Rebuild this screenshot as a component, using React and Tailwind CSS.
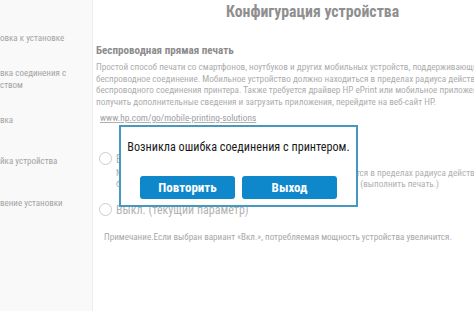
const body = { fontFamily: "'Roboto Condensed', Roboto, sans-serif" };

function Radio() {
  return <span className="inline-block w-[13px] h-[13px] rounded-full border border-[#cdcdcd] bg-white shrink-0" />;
}

export default function App() {
  return (
    <div className="relative w-[474px] h-[311px] overflow-hidden bg-white flex text-[#a6a6a6]" style={body}>
      {/* Sidebar */}
      <div className="w-[93px] shrink-0 h-full bg-[#f9f9f9] border-r border-[#ededed] overflow-hidden whitespace-nowrap text-[9px] text-[#a3a3a3]">
        <div className="pt-[30px] leading-[16px]">овка к установке</div>
        <div className="mt-[21px] leading-[12px]">
          <div>вка соединения с</div>
          <div>ством</div>
        </div>
        <div className="mt-[21px] leading-[16px]">вка</div>
        <div className="mt-[25px] leading-[16px]">йка устройства</div>
        <div className="mt-[26px] leading-[16px]">вение установки</div>
      </div>

      {/* Main */}
      <div className="flex-1 min-w-0 whitespace-nowrap">
        <div className="pl-[133px] pt-[1px] text-[15.8px] leading-[22px] font-bold text-[#8f8f8f]">
          Конфигурация устройства
        </div>
        <div className="pl-[3px] mt-[20px] text-[11.1px] leading-[16px] font-bold text-[#8c8c8c]">
          Беспроводная прямая печать
        </div>
        <div className="pl-[3px] mt-[2px] text-[9.2px] leading-[11.7px] text-[#adadad]">
          <div>Простой способ печати со смартфонов, ноутбуков и других мобильных устройств, поддерживающих</div>
          <div>беспроводное соединение. Мобильное устройство должно находиться в пределах радиуса действия</div>
          <div>беспроводного соединения принтера. Также требуется драйвер HP ePrint или мобильное приложение.</div>
          <div>получить дополнительные сведения и загрузить приложения, перейдите на веб-сайт HP.</div>
        </div>
        <div className="pl-[7px] mt-[3px] text-[9.4px] leading-[14px] text-[#a0a0a0] underline decoration-[#b0b0b0]">
          www.hp.com/go/mobile-printing-solutions
        </div>

        <div className="pl-[6px] mt-[26px] flex items-center gap-[4px] text-[12px] leading-[16px] text-[#b3b3b3]">
          <Radio />
          <span>Вкл.</span>
        </div>
        <div className="pl-[23px] text-[9.2px] leading-[11px] text-[#b0b0b0]">
          <div>Мобильные устройства могут печатать напрямую если находятся в пределах радиуса действия</div>
          <div>беспроводного соединения принтера HP, и иметь возможность (выполнить печать.)</div>
        </div>
        <div className="pl-[6px] mt-[13px] flex items-center gap-[4px] text-[12px] leading-[16px] text-[#b3b3b3]">
          <Radio />
          <span>Выкл. (текущий параметр)</span>
        </div>
        <div className="pl-[11px] mt-[12px] text-[9.1px] leading-[14px] text-[#a8a8a8]">
          Примечание.Если выбран вариант «Вкл.», потребляемая мощность устройства увеличится.
        </div>
      </div>

      {/* Dialog */}
      <div className="absolute left-[119px] top-[125px] w-[239px] h-[82px] bg-white border-2 border-[#4598c0] flex flex-col items-center">
        <div className="mt-[10px] text-[12.2px] leading-[20px] text-[#1a1a1a] whitespace-nowrap">
          Возникла ошибка соединения с принтером.
        </div>
        <div className="mt-[19px] flex gap-[7px]">
          <button className="w-[95px] h-[23px] rounded-[3px] bg-[#0e88cb] text-white font-bold text-[13px] leading-[23px]">
            Повторить
          </button>
          <button className="w-[95px] h-[23px] rounded-[3px] bg-[#0e88cb] text-white font-bold text-[13px] leading-[23px]">
            Выход
          </button>
        </div>
      </div>
    </div>
  );
}
